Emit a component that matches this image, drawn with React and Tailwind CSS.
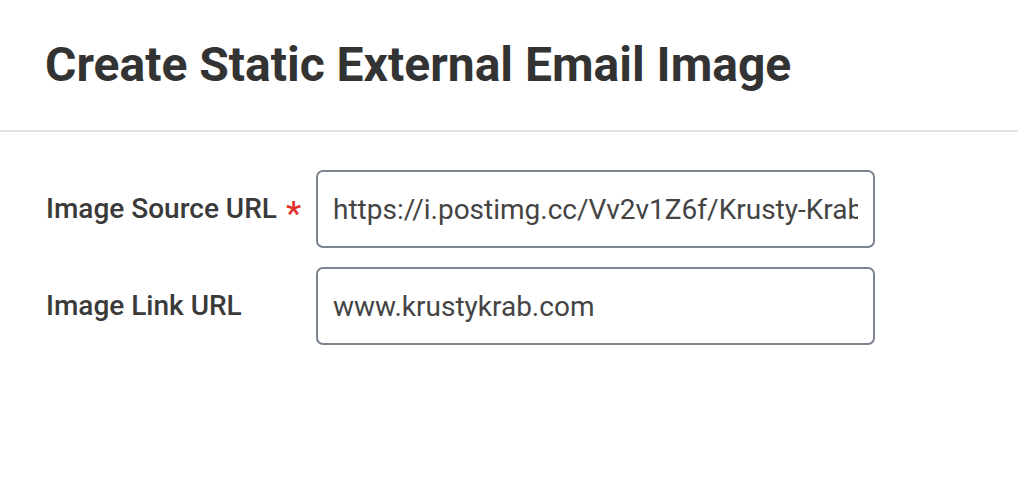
export default function App() {
  return (
    <div className="w-[1018px] h-[478px] bg-white" style={{ fontFamily: "Roboto, 'Liberation Sans', sans-serif" }}>
      <div className="h-[132px] border-b-2 border-[#e3e3e6] flex items-center pl-[45px]">
        <h1 className="text-[48px] font-bold text-[#333333] leading-none">Create Static External Email Image</h1>
      </div>
      <div className="pl-[46px] pt-[38px] flex flex-col gap-[19px]">
        <div className="flex items-center">
          <label className="w-[270px] flex items-center text-[28px] font-medium text-[#3a3a3a]">
            <span>Image Source URL</span>
            <span className="ml-[9px] text-[#e0322b] text-[34px] leading-none mt-[8px]">*</span>
          </label>
          <input
            readOnly
            value="https://i.postimg.cc/Vv2v1Z6f/Krusty-Krab-Logo.png"
            className="w-[559px] h-[78px] border-2 border-[#7b848f] rounded-[7px] px-[15px] text-[28px] text-[#444444] outline-none bg-white"
            style={{ fontFamily: "Roboto, 'Liberation Sans', sans-serif" }}
          />
        </div>
        <div className="flex items-center">
          <label className="w-[270px] text-[28px] font-medium text-[#3a3a3a]">Image Link URL</label>
          <input
            readOnly
            value="www.krustykrab.com"
            className="w-[559px] h-[78px] border-2 border-[#7b848f] rounded-[7px] px-[15px] text-[28px] text-[#444444] outline-none bg-white"
            style={{ fontFamily: "Roboto, 'Liberation Sans', sans-serif" }}
          />
        </div>
      </div>
    </div>
  );
}
